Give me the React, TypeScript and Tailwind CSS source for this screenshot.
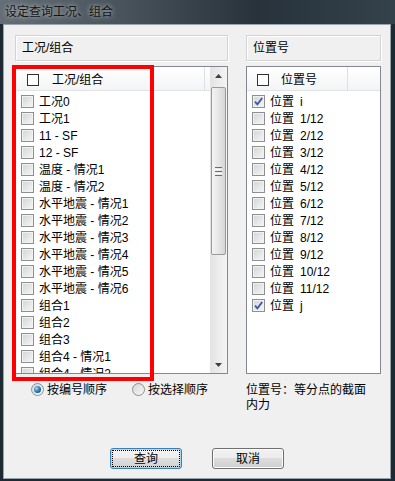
import React from "react";

const leftItems: string[] = [
  "工况0",
  "工况1",
  "11 - SF",
  "12 - SF",
  "温度 - 情况1",
  "温度 - 情况2",
  "水平地震 - 情况1",
  "水平地震 - 情况2",
  "水平地震 - 情况3",
  "水平地震 - 情况4",
  "水平地震 - 情况5",
  "水平地震 - 情况6",
  "组合1",
  "组合2",
  "组合3",
  "组合4 - 情况1",
  "组合4 - 情况2",
];

const rightItems: { num: string; checked: boolean }[] = [
  { num: "i", checked: true },
  { num: "1/12", checked: false },
  { num: "2/12", checked: false },
  { num: "3/12", checked: false },
  { num: "4/12", checked: false },
  { num: "5/12", checked: false },
  { num: "6/12", checked: false },
  { num: "7/12", checked: false },
  { num: "8/12", checked: false },
  { num: "9/12", checked: false },
  { num: "10/12", checked: false },
  { num: "11/12", checked: false },
  { num: "j", checked: true },
];

const CheckBox: React.FC<{ checked?: boolean }> = ({ checked }) => (
  <span className="relative flex h-[13px] w-[13px] shrink-0 items-center justify-center border border-[#8e8f8f] bg-[linear-gradient(135deg,#d2d4d6,#f6f6f6)] shadow-[inset_0_0_0_1px_#f2f2f2]">
    {checked && (
      <svg width="11" height="11" viewBox="0 0 11 11" className="absolute">
        <path d="M2 5.6 L4.4 8.4 L9.2 2" fill="none" stroke="#3a57a6" strokeWidth="1.8" />
      </svg>
    )}
  </span>
);

const HeaderBox = () => (
  <span className="h-[12px] w-[12px] shrink-0 border border-[#333] bg-white" />
);

const Radio: React.FC<{ checked?: boolean }> = ({ checked }) => (
  <span className="flex h-[13px] w-[13px] shrink-0 items-center justify-center rounded-full border border-[#8e8f8f] bg-[linear-gradient(135deg,#d6d6d6,#f8f8f8)]">
    {checked && (
      <span className="h-[7px] w-[7px] rounded-full bg-[radial-gradient(circle_at_35%_35%,#9ad8f8,#2373b3_55%,#0e4378)]" />
    )}
  </span>
);

const StaticBox: React.FC<{ label: string }> = ({ label }) => (
  <div className="flex h-[26px] items-center border border-[#d3d3d3] pl-[6px] text-[12px] shadow-[inset_1px_1px_0_#fff,1px_1px_0_#fff]">
    {label}
  </div>
);

const Arrow: React.FC<{ down?: boolean }> = ({ down }) => (
  <svg width="7" height="4" viewBox="0 0 7 4">
    <path d={down ? "M0 0 L7 0 L3.5 4Z" : "M0 4 L3.5 0 L7 4Z"} fill="#404040" />
  </svg>
);

const ScrollBar = () => (
  <div className="flex w-[17px] shrink-0 flex-col bg-[linear-gradient(to_right,#e3e3e3,#f4f4f4)]">
    <div className="flex h-[17px] items-center justify-center">
      <Arrow />
    </div>
    <div className="mx-[1px] mt-[3px] flex h-[168px] flex-col items-center justify-center gap-[1px] rounded-[2px] border border-[#9a9a9a] bg-[linear-gradient(to_right,#f4f4f4,#e6e6e6_50%,#d6d6d6)]">
      <span className="h-[1px] w-[7px] bg-[#6d6d6d]" />
      <span className="h-[1px] w-[7px] bg-[#fcfcfc]" />
      <span className="h-[1px] w-[7px] bg-[#6d6d6d]" />
      <span className="h-[1px] w-[7px] bg-[#fcfcfc]" />
      <span className="h-[1px] w-[7px] bg-[#6d6d6d]" />
    </div>
    <div className="flex-1" />
    <div className="flex h-[17px] items-center justify-center">
      <Arrow down />
    </div>
  </div>
);

export default function App() {
  return (
    <div className="flex h-[481px] w-[395px] flex-col overflow-hidden bg-[#1e2a33] font-['Liberation_Sans','Noto_Sans_CJK_SC',sans-serif] text-black">
      {/* title bar */}
      <div className="flex h-[24px] shrink-0 items-center bg-[linear-gradient(to_right,#646e76_0%,#444f58_35%,#27323b_65%,#34424c_100%)] pl-[5px] text-[12px] text-[#141414] [text-shadow:0_0_5px_rgba(255,255,255,0.8)]">
        设定查询工况、组合
      </div>

      {/* client */}
      <div className="relative mb-[2px] ml-[3px] mr-[4px] flex flex-1 flex-col border border-[#9aa3a9] bg-[#f0f0f0] text-[12px]">
        <div className="flex gap-[18px] pl-[11px] pt-[10px]">
          {/* left column */}
          <div className="flex w-[213px] flex-col">
            <StaticBox label="工况/组合" />
            <div className="mt-[5px] flex h-[308px] border border-[#828790] bg-white">
              <div className="flex min-w-0 flex-1 flex-col overflow-hidden">
                <div className="flex h-[24px] shrink-0 border-b border-[#e0e2e5] bg-[linear-gradient(#ffffff,#f3f4f6)]">
                  <div className="flex w-[189px] items-center border-r border-[#dcdfe3] pl-[11px] pt-[3px]">
                    <HeaderBox />
                    <span className="ml-[13px] leading-none">工况/组合</span>
                  </div>
                </div>
                <div className="mt-[2px] flex flex-col">
                  {leftItems.map((t) => (
                    <div key={t} className="flex h-[17px] shrink-0 items-center pl-[5px]">
                      <CheckBox />
                      <span className="ml-[5px] whitespace-nowrap leading-none">{t}</span>
                    </div>
                  ))}
                </div>
              </div>
              <ScrollBar />
            </div>
            <div className="mt-[9px] flex h-[13px] items-center pl-[16px]">
              <Radio checked />
              <span className="ml-[3px] leading-none">按编号顺序</span>
              <span className="ml-[25px]">
                <Radio />
              </span>
              <span className="ml-[3px] leading-none">按选择顺序</span>
            </div>
          </div>

          {/* right column */}
          <div className="flex w-[135px] flex-col">
            <StaticBox label="位置号" />
            <div className="mt-[5px] flex h-[308px] flex-col overflow-hidden border border-[#828790] bg-white">
              <div className="flex h-[24px] shrink-0 border-b border-[#e0e2e5] bg-[linear-gradient(#ffffff,#f3f4f6)]">
                <div className="flex w-[101px] items-center border-r border-[#dcdfe3] pl-[10px] pt-[3px]">
                  <HeaderBox />
                  <span className="ml-[12px] leading-none">位置号</span>
                </div>
              </div>
              <div className="mt-[2px] flex flex-col">
                {rightItems.map((r) => (
                  <div key={r.num} className="flex h-[17px] shrink-0 items-center pl-[5px]">
                    <CheckBox checked={r.checked} />
                    <span className="ml-[5px] leading-none">位置</span>
                    <span className="ml-[6px] leading-none">{r.num}</span>
                  </div>
                ))}
              </div>
            </div>
            <p className="mt-[9px] leading-[15px]">
              位置号：等分点的截面
              <br />
              内力
            </p>
          </div>
        </div>

        {/* buttons */}
        <div className="mb-[9px] mt-auto flex justify-center gap-[30px]">
          <button className="h-[21px] w-[72px] rounded-[3px] border border-[#3c7fb1] bg-[linear-gradient(#f4f4f4,#ededed_50%,#dedede_50%,#d2d2d2)] p-[2px] text-[12px] shadow-[inset_0_0_0_1px_#a9d9f2]">
            <span className="flex h-full w-full items-center justify-center outline-1 outline-dotted outline-black">
              查询
            </span>
          </button>
          <button className="flex h-[21px] w-[72px] items-center justify-center rounded-[3px] border border-[#707070] bg-[linear-gradient(#f2f2f2,#ebebeb_50%,#dddddd_50%,#cfcfcf)] text-[12px] shadow-[inset_0_0_0_1px_#fcfcfc]">
            取消
          </button>
        </div>

        {/* red annotation */}
        <div className="pointer-events-none absolute left-[8px] top-[40px] h-[316px] w-[142px] border-[4px] border-[#ff0000]" />
      </div>
    </div>
  );
}
